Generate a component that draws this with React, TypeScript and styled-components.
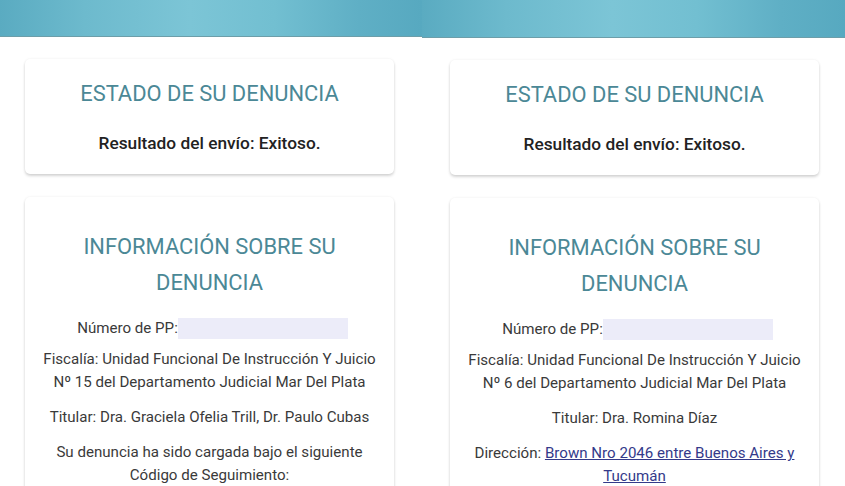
import React from "react";
import styled, { createGlobalStyle } from "styled-components";

const Global = createGlobalStyle`
  html, body { margin: 0; padding: 0; background: #ffffff; }
  body { font-family: Roboto, "Noto Sans", Arial, sans-serif; color: #333; }
  * { box-sizing: border-box; }
`;

const Screen = styled.div`
  display: flex;
  width: 845px;
  height: 486px;
  overflow: hidden;
  background: #fff;
`;

const Phone = styled.section<{ $w: number }>`
  width: ${(p) => p.$w}px;
  flex: none;
  display: flex;
  flex-direction: column;
`;

const TopBar = styled.header<{ $h: number }>`
  height: ${(p) => p.$h}px;
  flex: none;
  background: linear-gradient(
    90deg,
    #5aabc1 0%,
    #6dbacd 20%,
    #7cc5d6 45%,
    #72bfd1 65%,
    #5fafc5 85%,
    #57a9c0 100%
  );
  border-bottom: 1px solid #6d9ea9;
`;

const Content = styled.main<{ $l: number; $r: number }>`
  display: flex;
  flex-direction: column;
  gap: 23px;
  padding: 22px ${(p) => p.$r}px 0 ${(p) => p.$l}px;
`;

const Card = styled.div<{ $top: number; $bottom: number }>`
  background: #fff;
  border-radius: 5px;
  box-shadow: 0 2px 3px rgba(0, 0, 0, 0.16), 0 0 3px rgba(0, 0, 0, 0.06);
  padding: ${(p) => p.$top}px 10px ${(p) => p.$bottom}px;
  display: flex;
  flex-direction: column;
  align-items: center;
  text-align: center;
`;

const Title = styled.h2<{ $after: number }>`
  margin: 0 0 ${(p) => p.$after}px;
  font-family: Roboto, Arial, sans-serif;
  font-weight: 400;
  font-size: 21.9px;
  line-height: 36px;
  color: #4b8896;
  text-transform: uppercase;
  white-space: nowrap;
`;

const Result = styled.p`
  margin: 0;
  font-size: 17.3px;
  line-height: 24px;
  font-weight: 500;
  color: #222;
`;

const Line = styled.p`
  margin: 0 0 12px;
  font-size: 15.1px;
  line-height: 23px;
  color: #3a3a3a;
  white-space: nowrap;
`;

const NumberRow = styled.div`
  display: flex;
  align-items: center;
  justify-content: center;
  margin-bottom: 9px;
  padding-left: 6px;
  font-size: 15.1px;
  line-height: 22px;
  color: #3a3a3a;
`;

const Hidden = styled.span`
  display: inline-block;
  width: 170px;
  height: 21px;
  background: #ececf9;
`;

const Link = styled.a`
  color: #343a8a;
  text-decoration: underline;
`;

type Data = {
  w: number;
  barH: number;
  padL: number;
  padR: number;
  fiscalia: string;
  titular: string;
  last: React.ReactNode;
};

const phones: Data[] = [
  {
    w: 422,
    barH: 37,
    padL: 25,
    padR: 28,
    fiscalia: "Nº 15 del Departamento Judicial Mar Del Plata",
    titular: "Titular: Dra. Graciela Ofelia Trill, Dr. Paulo Cubas",
    last: (
      <>
        Su denuncia ha sido cargada bajo el siguiente
        <br />
        Código de Seguimiento:
      </>
    ),
  },
  {
    w: 423,
    barH: 38,
    padL: 28,
    padR: 26,
    fiscalia: "Nº 6 del Departamento Judicial Mar Del Plata",
    titular: "Titular: Dra. Romina Díaz",
    last: (
      <>
        Dirección:{" "}
        <Link href="#">
          Brown Nro 2046 entre Buenos Aires y
          <br />
          Tucumán
        </Link>
      </>
    ),
  },
];

export default function App() {
  return (
    <>
      <Global />
      <Screen>
        {phones.map((p, i) => (
          <Phone key={i} $w={p.w}>
            <TopBar $h={p.barH} />
            <Content $l={p.padL} $r={p.padR}>
              <Card $top={17} $bottom={19}>
                <Title $after={19}>Estado de su denuncia</Title>
                <Result>Resultado del envío: Exitoso.</Result>
              </Card>
              <Card $top={32} $bottom={20}>
                <Title $after={16}>
                  Información sobre su
                  <br />
                  denuncia
                </Title>
                <NumberRow>
                  Número de PP:
                  <Hidden />
                </NumberRow>
                <Line>
                  Fiscalía: Unidad Funcional De Instrucción Y Juicio
                  <br />
                  {p.fiscalia}
                </Line>
                <Line>{p.titular}</Line>
                <Line>{p.last}</Line>
              </Card>
            </Content>
          </Phone>
        ))}
      </Screen>
    </>
  );
}
